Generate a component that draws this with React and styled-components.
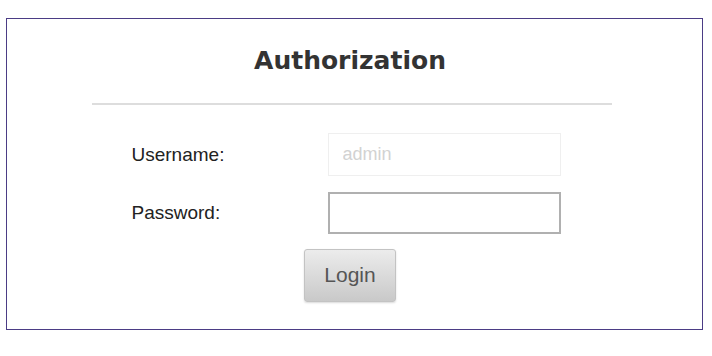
import React from "react";
import styled, { createGlobalStyle } from "styled-components";

const Global = createGlobalStyle`
  html, body {
    margin: 0;
    padding: 0;
    background: #fff;
  }
`;

export default function App() {
  return (
    <>
      <Global />
      <Page>
        <Panel>
          <Title>Authorization</Title>
          <Divider />
          <Form onSubmit={(e) => e.preventDefault()}>
            <Label>Username:</Label>
            <Input disabled defaultValue="admin" />
            <Label>Password:</Label>
            <Input type="password" active />
            <Actions>
              <Button type="submit">Login</Button>
            </Actions>
          </Form>
        </Panel>
      </Page>
    </>
  );
}

const Page = styled.div`
  padding: 18px 9px 26px 6px;
`;

const Panel = styled.div`
  box-sizing: border-box;
  width: 697px;
  height: 312px;
  border: 1px solid #4b3c85;
  display: flex;
  flex-direction: column;
  align-items: center;
`;

const Title = styled.h1`
  margin: 26px 0 0 -9px;
  font-family: "DejaVu Sans", Verdana, sans-serif;
  font-weight: bold;
  font-size: 25px;
  line-height: 32px;
  color: #333;
`;

const Divider = styled.div`
  margin: 26px 0 0 -6px;
  width: 520px;
  height: 2px;
  background: #ddd;
`;

const Form = styled.form`
  margin: 28px 0 0 -17px;
  display: grid;
  grid-template-columns: 196px 233px;
  grid-auto-rows: 43px;
  row-gap: 15px;
  align-items: center;
  font-family: "Liberation Sans", Arial, sans-serif;
`;

const Label = styled.label`
  font-size: 19px;
  color: #222;
`;

const Input = styled.input`
  box-sizing: border-box;
  width: 233px;
  height: ${(p) => (p.active ? "42px" : "43px")};
  padding: 0 14px;
  font-family: "Liberation Sans", Arial, sans-serif;
  font-size: 18px;
  color: #ccc;
  background: #fff;
  border: ${(p) => (p.active ? "2px solid #b0b0b0" : "1px solid #efefef")};
  border-radius: 0;
  outline: none;
  &:disabled {
    color: #d2d2d2;
    background: #fff;
  }
`;

const Actions = styled.div`
  grid-column: 1 / span 2;
  display: flex;
  justify-content: center;
  padding-left: 8px;
  margin-top: 9px;
`;

const Button = styled.button`
  width: 92px;
  height: 53px;
  font-family: "Liberation Sans", Arial, sans-serif;
  font-size: 21px;
  color: #555;
  background: linear-gradient(#ececec, #c9c9c9);
  border: 1px solid #c3c3c3;
  border-radius: 3px;
  box-shadow: 0 1px 2px rgba(0, 0, 0, 0.15);
  cursor: pointer;
`;
